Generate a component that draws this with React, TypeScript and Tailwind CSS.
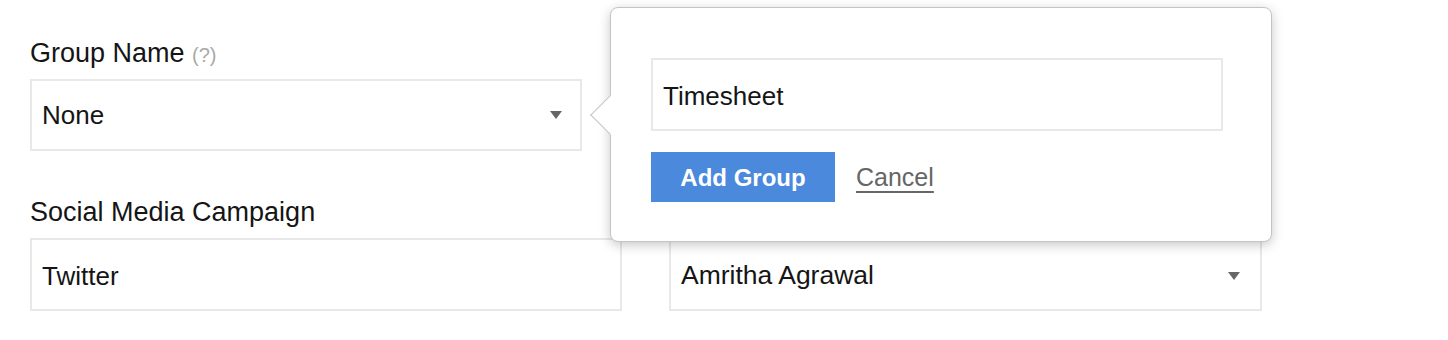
import React from "react";

function Caret() {
  return (
    <svg width="12" height="8" viewBox="0 0 12 8" className="shrink-0">
      <polygon points="0,0 12,0 6,8" fill="#666666" />
    </svg>
  );
}

function Label({ children }: { children?: React.ReactNode }) {
  return <div className="h-[28px] text-[27px] leading-[28px] text-[#151515] whitespace-nowrap">{children}</div>;
}

export default function App() {
  return (
    <div className="relative w-[1448px] h-[340px] bg-white overflow-hidden font-['Liberation_Sans',Arial,sans-serif]">
      <div className="pl-[30px] pt-[39px]">
        {/* Group name */}
        <Label>
          Group Name <span className="text-[20px] text-[#aaaaaa]">(?)</span>
        </Label>
        <div className="mt-[12px] w-[552px] h-[72px] border-2 border-[#e8e8e8] flex items-center justify-between pl-[10px] pr-[18px]">
          <span className="text-[26px] text-[#151515]">None</span>
          <Caret />
        </div>

        {/* Second row */}
        <div className="mt-[47px] flex gap-[47px]">
          <div className="w-[592px]">
            <Label>Social Media Campaign</Label>
            <div className="mt-[12px] h-[73px] border-2 border-[#e8e8e8] flex items-center pl-[10px] pt-[3px]">
              <span className="text-[26px] text-[#151515]">Twitter</span>
            </div>
          </div>
          <div className="w-[593px]">
            <Label />
            <div className="mt-[12px] h-[73px] border-2 border-[#e8e8e8] flex items-center justify-between pl-[10px] pr-[20px] pt-[3px]">
              <span className="text-[26.5px] text-[#151515]">Amritha Agrawal</span>
              <Caret />
            </div>
          </div>
        </div>
      </div>

      {/* Add group popover */}
      <div className="absolute left-[610px] top-[7px] w-[662px] h-[235px] bg-white border border-[#c4c4c4] rounded-[8px] shadow-[0_3px_12px_rgba(0,0,0,0.22)]">
        <div className="absolute left-[-15px] top-[93px] w-[28px] h-[28px] rotate-45 bg-white border-l border-b border-[#c4c4c4]" />
        <div className="relative pl-[40px] pt-[50px]">
          <div className="w-[572px] h-[73px] border-2 border-[#e8e8e8] flex items-center pl-[10px] pt-[3px]">
            <span className="text-[26px] text-[#151515]">Timesheet</span>
          </div>
          <div className="mt-[21px] flex items-center gap-[21px]">
            <button className="w-[184px] h-[50px] bg-[#4a89dc] text-white text-[24px] font-bold pt-[1px]">Add Group</button>
            <button className="text-[25px] text-[#666666] underline underline-offset-[5px] pt-[2px]">Cancel</button>
          </div>
        </div>
      </div>
    </div>
  );
}
